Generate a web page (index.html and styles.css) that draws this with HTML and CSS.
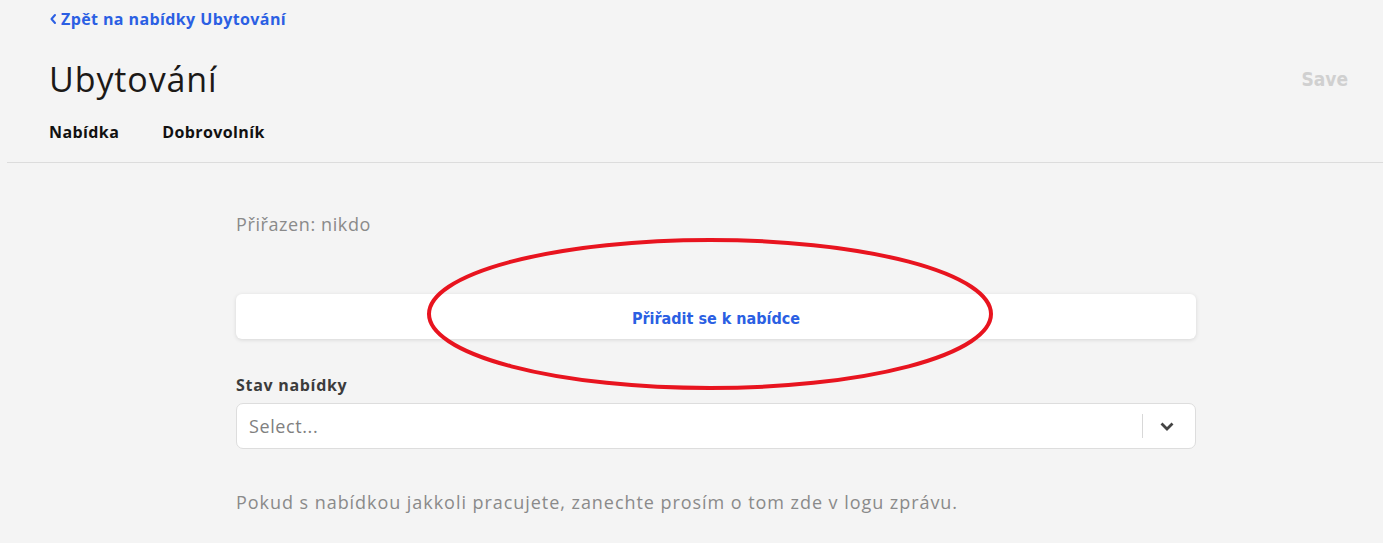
FILE: index.html
```html
<!DOCTYPE html>
<html lang="cs">
<head>
<meta charset="utf-8">
<title>Ubytování</title>
<link rel="stylesheet" href="styles.css">
</head>
<body>
<div class="page">
  <header class="header">
    <a class="back" href="#">
      <svg class="back-icon" width="8" height="12" viewBox="0 0 8 12"><path d="M6 2 L2.5 6 L6 10" fill="none" stroke="currentColor" stroke-width="2" stroke-linecap="round" stroke-linejoin="round"/></svg>
      Zpět na nabídky Ubytování
    </a>
    <div class="title-row">
      <h1 class="title">Ubytování</h1>
      <button class="save">Save</button>
    </div>
    <nav class="tabs">
      <a class="tab" href="#">Nabídka</a>
      <a class="tab" href="#">Dobrovolník</a>
    </nav>
  </header>
  <main class="content">
    <p class="assigned">Přiřazen: nikdo</p>
    <div class="assign-wrap">
      <button class="assign">Přiřadit se k nabídce</button>
      <svg class="annotation" width="574" height="160" viewBox="0 0 574 160"><ellipse cx="287" cy="80" rx="281" ry="74" fill="none" stroke="#e8141f" stroke-width="4"/></svg>
    </div>
    <label class="field-label">Stav nabídky</label>
    <div class="select">
      <span class="placeholder">Select...</span>
      <span class="sep"></span>
      <svg class="chev" width="16" height="11" viewBox="0 0 16 11"><path d="M2.5 2.5 L8 8 L13.5 2.5" fill="none" stroke="#444" stroke-width="2.8"/></svg>
    </div>
    <p class="note">Pokud s nabídkou jakkoli pracujete, zanechte prosím o tom zde v logu zprávu.</p>
  </main>
</div>
</body>
</html>
```
FILE: styles.css
```css
html, body {
  margin: 0;
  padding: 0;
  background: #f4f4f4;
}
body {
  font-family: "Open Sans", "Noto Sans", sans-serif;
  color: #1a1a1a;
}
.page {
  padding-left: 7px;
}
.header {
  padding: 8px 35px 0 42px;
  border-bottom: 1px solid #dcdcdc;
}
.back {
  display: inline-flex;
  align-items: center;
  gap: 4px;
  color: #2b5fe3;
  font-weight: 700;
  font-size: 16px;
  letter-spacing: 0.4px;
  text-decoration: none;
  height: 20px;
}
.back-icon {
  margin-top: 1px;
}
.title-row {
  display: flex;
  justify-content: space-between;
  align-items: center;
  margin-top: 27px;
}
.title {
  margin: 0;
  font-weight: 400;
  font-size: 34px;
  letter-spacing: 0.9px;
  line-height: 44px;
  color: #1c1917;
}
.save {
  border: none;
  background: none;
  padding: 0;
  font-family: "DejaVu Sans Condensed", "DejaVu Sans", sans-serif;
  font-weight: 700;
  font-size: 19px;
  color: #d0d0d0;
}
.tabs {
  display: flex;
  gap: 43px;
  margin-top: 21px;
  padding-bottom: 20px;
}
.tab {
  font-size: 16px;
  letter-spacing: 0.4px;
  font-weight: 700;
  color: #111;
  text-decoration: none;
  line-height: 20px;
}
.content {
  width: 960px;
  margin-left: 229px;
  padding-top: 49px;
}
.assigned {
  margin: 0;
  font-size: 18px;
  letter-spacing: 0.6px;
  line-height: 24px;
  color: #8a8a8a;
}
.assign-wrap {
  position: relative;
  margin-top: 58px;
}
.assign {
  display: block;
  width: 100%;
  height: 45px;
  padding: 3px 0 0;
  border: none;
  border-radius: 6px;
  background: #fff;
  box-shadow: 0 1px 4px rgba(0,0,0,0.12);
  font-family: "DejaVu Sans Condensed", "DejaVu Sans", sans-serif;
  font-weight: 700;
  font-size: 16px;
  color: #2b5fe3;
}
.annotation {
  position: absolute;
  left: 187px;
  top: -60px;
  pointer-events: none;
}
.field-label {
  display: block;
  margin-top: 35px;
  font-size: 16px;
  letter-spacing: 0.7px;
  font-weight: 700;
  color: #3c3c3c;
  line-height: 22px;
}
.select {
  display: flex;
  align-items: center;
  height: 44px;
  margin-top: 7px;
  background: #fff;
  border: 1px solid #dddddd;
  border-radius: 7px;
  padding: 0 20px 0 12px;
}
.placeholder {
  flex: 1;
  font-size: 18px;
  letter-spacing: 0.6px;
  color: #808080;
}
.sep {
  width: 1px;
  height: 24px;
  background: #d8d8d8;
  margin-right: 16px;
}
.note {
  margin: 41px 0 0;
  font-size: 18px;
  letter-spacing: 0.95px;
  line-height: 24px;
  color: #8a8a8a;
}
```
